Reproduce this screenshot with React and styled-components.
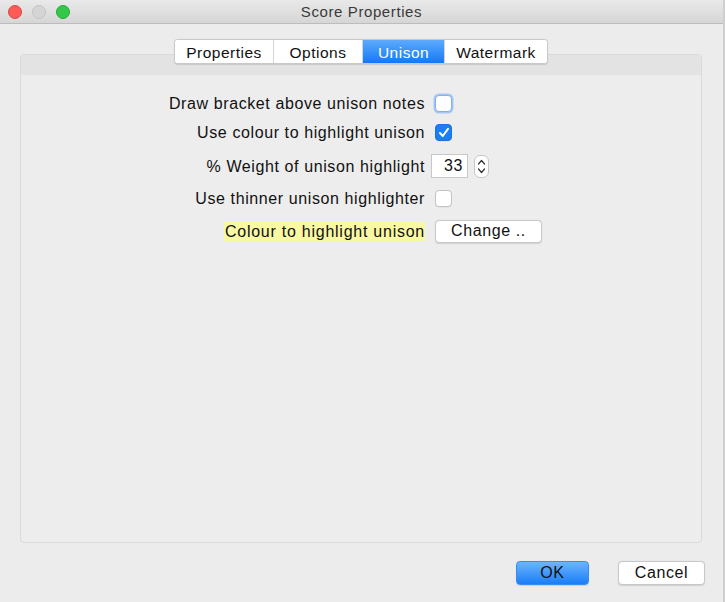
import React from "react";
import styled, { createGlobalStyle } from "styled-components";

const GlobalStyle = createGlobalStyle`
  html, body { margin: 0; padding: 0; background: #ececec; }
  body { font-family: "Liberation Sans", Arial, sans-serif; }
  * { box-sizing: border-box; }
`;

const Window = styled.div`
  width: 725px;
  height: 602px;
  background: #ececec;
  display: flex;
  flex-direction: column;
  border-right: 2px solid #cfcfcf;
  overflow: hidden;
`;

const TitleBar = styled.div`
  height: 24px;
  flex: none;
  display: grid;
  grid-template-columns: 1fr auto 1fr;
  align-items: center;
  background: linear-gradient(#e9e9e9, #d6d6d6);
  border-bottom: 1px solid #bcbcbc;
  padding: 0 8px;
`;

const Lights = styled.div`
  display: flex;
  gap: 10px;
  align-items: center;
`;

const Light = styled.span`
  width: 14px;
  height: 14px;
  border-radius: 50%;
  background: ${(p) => p.$c};
  border: 0.5px solid ${(p) => p.$b};
`;

const Title = styled.div`
  font-size: 15px;
  letter-spacing: 0.6px;
  color: #3a3a3a;
`;

const Body = styled.div`
  flex: 1;
  display: flex;
  flex-direction: column;
  padding: 15px 21px 0 20px;
`;

const TabsRow = styled.div`
  display: flex;
  justify-content: center;
  margin-bottom: -10px;
  position: relative;
  z-index: 1;
`;

const Tabs = styled.div`
  display: flex;
  height: 25px;
  background: #fff;
  border: 1px solid #c9c9c9;
  border-radius: 4px;
  box-shadow: 0 0.5px 1px rgba(0, 0, 0, 0.12);
  overflow: hidden;
`;

const Tab = styled.div`
  display: flex;
  align-items: center;
  justify-content: center;
  padding-top: 2px;
  width: ${(p) => p.$w}px;
  font-size: 15.5px;
  letter-spacing: 0.5px;
  color: ${(p) => (p.$active ? "#fff" : "#111")};
  background: ${(p) =>
    p.$active ? "linear-gradient(#5eaafc, #1479f6)" : "#fff"};
  border-left: ${(p) => (p.$first ? "none" : "1px solid #d4d4d4")};
`;

const Panel = styled.div`
  height: 489px;
  border: 1px solid #dadada;
  border-radius: 4px;
  background: #ededed;
  display: flex;
  flex-direction: column;
  overflow: hidden;
`;

const Band = styled.div`
  height: 20px;
  flex: none;
  background: #e3e3e3;
`;

const Form = styled.div`
  padding-top: 15px;
  display: flex;
  flex-direction: column;
`;

const Row = styled.div`
  height: ${(p) => p.$h}px;
  display: grid;
  grid-template-columns: 404px auto;
  column-gap: 6px;
  align-items: center;
`;

const Label = styled.div`
  justify-self: end;
  font-size: 16px;
  letter-spacing: ${(p) => (p.$hl ? "0.75px" : "0.6px")};
  color: #111;
  line-height: 19px;
  background: ${(p) => (p.$hl ? "#f9f9a4" : "transparent")};
  padding-left: ${(p) => (p.$hl ? "1px" : "0")};
`;

const Controls = styled.div`
  display: flex;
  align-items: center;
  gap: 6px;
`;

const Check = styled.span`
  width: 17px;
  height: 17px;
  margin-left: 4px;
  border-radius: 4px;
  display: flex;
  align-items: center;
  justify-content: center;
  background: ${(p) => (p.$on ? "#1a7ef6" : "#fff")};
  border: 1px solid
    ${(p) => (p.$on ? "#1a72e0" : p.$focus ? "#7fb0f4" : "#c3c3c3")};
  box-shadow: ${(p) =>
    p.$focus ? "0 0 0 1.5px rgba(110,165,245,0.55)" : "0 0.5px 0.5px rgba(0,0,0,0.08)"};
`;

const NumField = styled.div`
  width: 37px;
  height: 24px;
  background: #fff;
  border: 1px solid #c8c8c8;
  font-size: 16px;
  letter-spacing: 0.6px;
  color: #111;
  display: flex;
  align-items: center;
  justify-content: flex-end;
  padding-right: 4px;
`;

const Spinner = styled.span`
  width: 15px;
  height: 23px;
  background: #fff;
  border: 1px solid #c6c6c6;
  border-radius: 6px;
  display: flex;
  align-items: center;
  justify-content: center;
`;

const Button = styled.button`
  font-family: "Liberation Sans", Arial, sans-serif;
  font-size: 16px;
  letter-spacing: 0.6px;
  color: #111;
  height: ${(p) => p.$h || 23}px;
  width: ${(p) => p.$w}px;
  margin-left: ${(p) => p.$ml || 0}px;
  padding: 0;
  border-radius: 4px;
  border: 1px solid ${(p) => (p.$primary ? "#3a8bf0" : "#c8c8c8")};
  background: ${(p) =>
    p.$primary ? "linear-gradient(#6db5fd, #1a7ef7)" : "#fff"};
  box-shadow: 0 0.5px 1px rgba(0, 0, 0, 0.12);
`;

const Footer = styled.div`
  display: flex;
  justify-content: flex-end;
  gap: 29px;
  padding: 18px 0 0 0;
  margin-right: -3px;
`;

const Chevrons = () => (
  <svg width="9" height="17" viewBox="0 0 9 17" fill="none" stroke="#333" strokeWidth="1.2" strokeLinecap="round" strokeLinejoin="round">
    <path d="M1.5 6 L4.5 2.5 L7.5 6" />
    <path d="M1.5 11 L4.5 14.5 L7.5 11" />
  </svg>
);

const Tick = () => (
  <svg width="12" height="11" viewBox="0 0 12 11" fill="none" stroke="#fff" strokeWidth="2" strokeLinecap="round" strokeLinejoin="round">
    <path d="M2 6 L4.8 9 L10 1.8" />
  </svg>
);

export default function App() {
  return (
    <>
      <GlobalStyle />
      <Window>
        <TitleBar>
          <Lights>
            <Light $c="#fc5b57" $b="#e0443e" />
            <Light $c="#d5d5d5" $b="#c4c4c4" />
            <Light $c="#34c84a" $b="#28a83a" />
          </Lights>
          <Title>Score Properties</Title>
          <div />
        </TitleBar>
        <Body>
          <TabsRow>
            <Tabs>
              <Tab $w={98} $first>Properties</Tab>
              <Tab $w={89}>Options</Tab>
              <Tab $w={82} $active>Unison</Tab>
              <Tab $w={103}>Watermark</Tab>
            </Tabs>
          </TabsRow>
          <Panel>
            <Band />
            <Form>
              <Row $h={26}>
                <Label>Draw bracket above unison notes</Label>
                <Controls>
                  <Check $focus />
                </Controls>
              </Row>
              <Row $h={32}>
                <Label>Use colour to highlight unison</Label>
                <Controls>
                  <Check $on>
                    <Tick />
                  </Check>
                </Controls>
              </Row>
              <Row $h={36}>
                <Label>% Weight of unison highlight</Label>
                <Controls>
                  <NumField>33</NumField>
                  <Spinner>
                    <Chevrons />
                  </Spinner>
                </Controls>
              </Row>
              <Row $h={28}>
                <Label>Use thinner unison highlighter</Label>
                <Controls>
                  <Check />
                </Controls>
              </Row>
              <Row $h={38}>
                <Label $hl>Colour to highlight unison</Label>
                <Controls>
                  <Button $w={107} $ml={4}>Change ..</Button>
                </Controls>
              </Row>
            </Form>
          </Panel>
          <Footer>
            <Button $primary $w={73} $h={24}>OK</Button>
            <Button $w={87} $h={24}>Cancel</Button>
          </Footer>
        </Body>
      </Window>
    </>
  );
}
